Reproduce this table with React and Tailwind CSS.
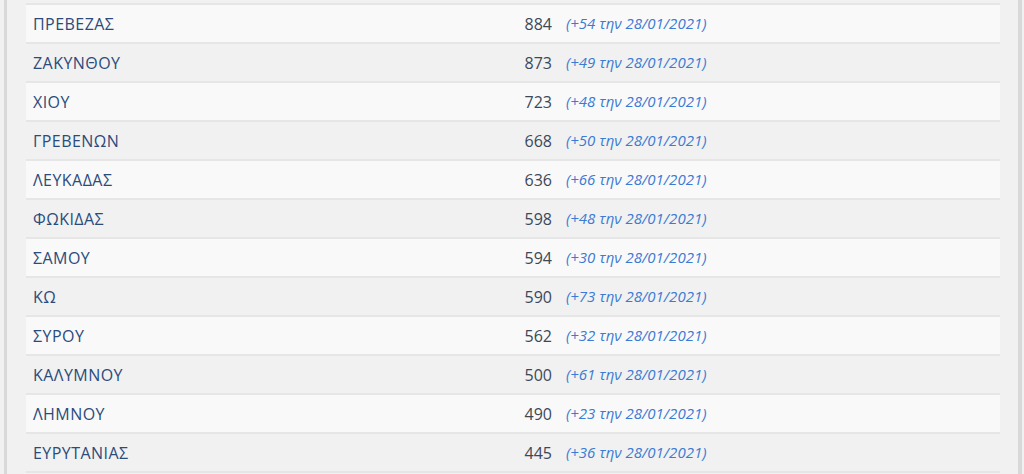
const rows = [
  ["ΠΡΕΒΕΖΑΣ", 884, 54],
  ["ΖΑΚΥΝΘΟΥ", 873, 49],
  ["ΧΙΟΥ", 723, 48],
  ["ΓΡΕΒΕΝΩΝ", 668, 50],
  ["ΛΕΥΚΑΔΑΣ", 636, 66],
  ["ΦΩΚΙΔΑΣ", 598, 48],
  ["ΣΑΜΟΥ", 594, 30],
  ["ΚΩ", 590, 73],
  ["ΣΥΡΟΥ", 562, 32],
  ["ΚΑΛΥΜΝΟΥ", 500, 61],
  ["ΛΗΜΝΟΥ", 490, 23],
  ["ΕΥΡΥΤΑΝΙΑΣ", 445, 36],
];

export default function App() {
  return (
    <div className="h-[474px] w-[1024px] overflow-hidden bg-[#f1f1f1] pl-[4px] pr-[2px] font-['Open_Sans',sans-serif]">
      <div className="h-full border-l-[3px] border-r-[4px] border-[#d9d9d9] pl-[19px] pr-[18px] pt-[3px]">
        <div className="flex flex-col">
          {rows.map(([name, total, diff], i) => (
            <div
              key={name}
              className={`flex h-[39px] items-center border-t-2 border-[#e6e6e6] ${i % 2 === 0 ? "bg-[#f9f9f9]" : "bg-[#f1f1f1]"}`}
            >
              <div className="w-[497px] pl-[7px] text-[16px] tracking-[0.45px] text-[#2b4b7b]">{name}</div>
              <div className="w-[29px] text-right text-[16px] text-[#3c4858]">{total}</div>
              <div className="ml-[14px] text-[15px] italic text-[#3b7bd3]">
                (+{diff} την 28/01/2021)
              </div>
            </div>
          ))}
          <div className="h-[39px] border-t-2 border-[#e6e6e6]" />
        </div>
      </div>
    </div>
  );
}
